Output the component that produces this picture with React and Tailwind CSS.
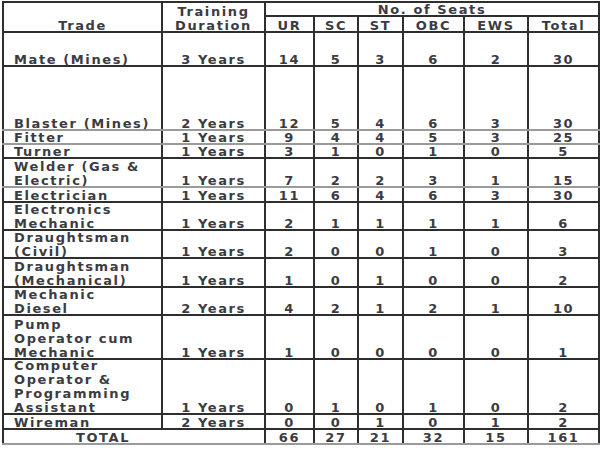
import React from "react";

const rows = [
  { trade: ["Mate (Mines)"], dur: "3 Years", v: [14, 5, 3, 6, 2, 30], h: "h-[34px]" },
  { trade: ["Blaster (Mines)"], dur: "2 Years", v: [12, 5, 4, 6, 3, 30], h: "h-[64px]", light: true },
  { trade: ["Fitter"], dur: "1 Years", v: [9, 4, 4, 5, 3, 25], h: "h-[14px]", light: true },
  { trade: ["Turner"], dur: "1 Years", v: [3, 1, 0, 1, 0, 5], h: "h-[14px]" },
  { trade: ["Welder (Gas &", "Electric)"], dur: "1 Years", v: [7, 2, 2, 3, 1, 15], h: "h-[29px]", light: true },
  { trade: ["Electrician"], dur: "1 Years", v: [11, 6, 4, 6, 3, 30], h: "h-[15px]" },
  { trade: ["Electronics", "Mechanic"], dur: "1 Years", v: [2, 1, 1, 1, 1, 6], h: "h-[28px]" },
  { trade: ["Draughtsman", "(Civil)"], dur: "1 Years", v: [2, 0, 0, 1, 0, 3], h: "h-[28px]" },
  { trade: ["Draughtsman", "(Mechanical)"], dur: "1 Years", v: [1, 0, 1, 0, 0, 2], h: "h-[29px]" },
  { trade: ["Mechanic", "Diesel"], dur: "2 Years", v: [4, 2, 1, 2, 1, 10], h: "h-[28px]" },
  { trade: ["Pump", "Operator cum", "Mechanic"], dur: "1 Years", v: [1, 0, 0, 0, 0, 1], h: "h-[44px]" },
  { trade: ["Computer", "Operator &", "Programming", "Assistant"], dur: "1 Years", v: [0, 1, 0, 1, 0, 2], h: "h-[55px]" },
  { trade: ["Wireman"], dur: "2 Years", v: [0, 0, 1, 0, 1, 2], h: "h-[15px]" },
];

const totals = [66, 27, 21, 32, 15, 161];

// cell text sits on the bottom line; negative margins let it ride over the borders a little
function Txt({ children }) {
  return <div className="-mt-[6px] -mb-[2px]">{children}</div>;
}

export default function App() {
  const cell = "border-2 border-[#2e2e2e] p-0 align-bottom";

  return (
    <div className="w-[600px] h-[450px] bg-white pl-[2px] pt-[1px] overflow-hidden">
      <table className="table-fixed border-collapse w-[596px] text-[#3b3b42] font-['DejaVu_Sans',sans-serif] font-bold text-[13px] leading-[14px] tracking-[1.6px]">
        <colgroup>
          <col className="w-[159px]" />
          <col className="w-[103px]" />
          <col className="w-[49px]" />
          <col className="w-[44px]" />
          <col className="w-[45px]" />
          <col className="w-[61px]" />
          <col className="w-[64px]" />
          <col className="w-[71px]" />
        </colgroup>
        <thead>
          <tr className="h-[14px]">
            <th rowSpan={2} className={`${cell} text-center font-bold`}>
              <Txt>Trade</Txt>
            </th>
            <th rowSpan={2} className={`${cell} text-center font-bold`}>
              <Txt>
                Training
                <br />
                Duration
              </Txt>
            </th>
            <th colSpan={6} className={`${cell} text-center font-bold`}>
              <Txt>No. of Seats</Txt>
            </th>
          </tr>
          <tr className="h-[16px]">
            {["UR", "SC", "ST", "OBC", "EWS", "Total"].map((c) => (
              <th key={c} className={`${cell} text-center font-bold`}>
                <Txt>{c}</Txt>
              </th>
            ))}
          </tr>
        </thead>
        <tbody>
          {rows.map((r, i) => {
            const b = r.light ? "border-b-[#9a9a9a]" : "";
            return (
              <tr key={i} className={r.h}>
                <td className={`${cell} ${b} pl-[10px] text-left`}>
                  <Txt>
                    {r.trade.map((t, j) => (
                      <div key={j}>{t}</div>
                    ))}
                  </Txt>
                </td>
                <td className={`${cell} ${b} text-center`}>
                  <Txt>{r.dur}</Txt>
                </td>
                {r.v.map((n, j) => (
                  <td key={j} className={`${cell} ${b} text-center`}>
                    <Txt>{n}</Txt>
                  </td>
                ))}
              </tr>
            );
          })}
          <tr className="h-[15px]">
            <td colSpan={2} className={`${cell} border-b-[#9a9a9a] text-left pl-[72px]`}>
              <Txt>TOTAL</Txt>
            </td>
            {totals.map((n, j) => (
              <td key={j} className={`${cell} border-b-[#9a9a9a] text-center`}>
                <Txt>{n}</Txt>
              </td>
            ))}
          </tr>
        </tbody>
      </table>
    </div>
  );
}
